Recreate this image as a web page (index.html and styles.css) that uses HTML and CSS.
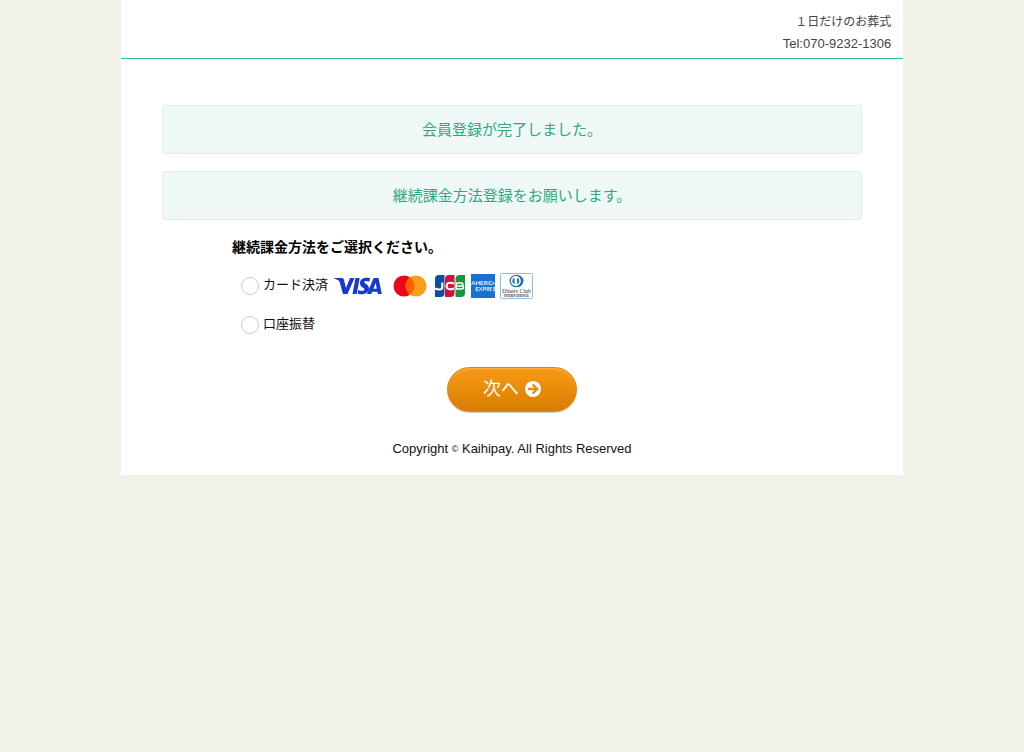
FILE: index.html
```html
<!DOCTYPE html>
<html lang="ja">
<head>
<meta charset="utf-8">
<meta name="viewport" content="width=device-width, initial-scale=1">
<title>会員登録</title>
<link rel="stylesheet" href="styles.css">
</head>
<body>
<div class="page">
  <header class="header">
    <p class="shop">１日だけのお葬式</p>
    <p class="tel">Tel:070-9232-1306</p>
  </header>
  <main class="main">
    <p class="notice">会員登録が完了しました。</p>
    <p class="notice">継続課金方法登録をお願いします。</p>
    <form class="form">
      <fieldset class="methods">
        <legend class="title">継続課金方法をご選択ください。</legend>
        <div class="option">
          <input class="radio" type="radio" name="method" id="card" value="card">
          <label class="label" for="card">カード決済</label>
          <span class="brands">
            <svg class="visa" width="48" height="18" viewBox="0 0 48 18" role="img" aria-label="VISA">
              <g fill="#1639d0">
                <path d="M0 1H7C9 1 9.700 1.500 10 3L12 11L16 1H20.500L13.500 17H9L5.500 4.500C4.500 3 2 2 0 1.500Z"/>
                <path d="M21.500 1H25.700L22.700 17H18.500Z"/>
                <path d="M36 1.300L35.300 4.700C33.500 3.900 30.300 3.800 30.300 5.200C30.300 6.700 35 7.300 35 11.200C35 15 31.600 17.200 28 17.200C26.200 17.200 24.600 16.800 23.600 16.400L24.300 12.900C26.300 14 30.500 14.400 30.500 12.300C30.500 10.500 26 10.200 26 6.200C26 1.300 31.500 0 36 1.300Z"/>
                <path fill-rule="evenodd" d="M41 1H44.500L47.800 17H43.900L43.400 14.700H38.200L37.200 17H33L39 2.200C39.400 1.300 40 1 41 1ZM41.700 6L39.400 11.700H42.800Z"/>
              </g>
            </svg>
            <svg class="mastercard" width="34" height="22" viewBox="0 0 34 22" role="img" aria-label="Mastercard">
              <circle cx="11" cy="11" r="10.500" fill="#eb0519"/>
              <circle cx="23" cy="11" r="10.500" fill="#f99d1c"/>
              <path d="M17 2.400A10.500 10.500 0 0 1 17 19.600A10.500 10.500 0 0 1 17 2.400Z" fill="#ff5f00"/>
            </svg>
            <svg class="jcb" width="30" height="24" viewBox="0 0 30 24" role="img" aria-label="JCB">
              <path d="M4 1H9.500V19Q9.500 23 5.500 23H0V5Q0 1 4 1Z" fill="#0c4f9c"/>
              <path d="M14 1H19.500V19Q19.500 23 15.500 23H10V5Q10 1 14 1Z" fill="#d2103c"/>
              <path d="M24.500 1H30V19Q30 23 26 23H20.500V5Q20.500 1 24.500 1Z" fill="#16983c"/>
              <path d="M7.300 8.500V13Q7.300 15.500 4.500 15.500Q2 15.500 0 14.500M18.800 9.500C15 8 11.600 8.600 11.600 12S15 16 18.800 14.500" fill="none" stroke="#fff" stroke-width="2"/>
              <path d="M21.300 8.500V15.500M21.300 9H26Q28 9 28 10.500T26 12H21.300M26 12Q28.500 12 28.500 13.500T26 15H21.300" fill="none" stroke="#fff" stroke-width="1.400"/>
            </svg>
            <svg class="amex" width="24" height="24" viewBox="0 0 24 24" role="img" aria-label="American Express">
              <path d="M0 0H24V24H0Z" fill="#1673d1"/>
              <g fill="none" stroke="#d8eafa" stroke-width=".9">
                <path d="M0.500 11L2.500 7L4.500 11M1.200 9.700H3.800M5.500 11V7.500L7 9.500L8.500 7.500V11M12 7.500H9.700V10.700H12M9.700 9.100H11.700M13.200 11V7.500H15.500V9.200H13.200M14.300 9.200L15.700 11M17 7.200V11M21 7.500H18.600V10.700H21M22 11V8L24 10.500"/>
                <path d="M7.500 13.500H5V16.700H7.500M5 15.100H7.200M8.200 13L11 17M11 13L8.200 17M12.300 17V13.500H14.500V15.200H12.300M16 17V13.500H18V15.200H16M17 15.200L18.300 17M20.700 13.500H19.200V16.700H20.700M19.200 15.100H20.500M24 13.500H22.300V15H24V16.700H22"/>
              </g>
            </svg>
            <svg class="diners" width="33" height="26" viewBox="0 0 33 26" role="img" aria-label="Diners Club International">
              <rect x=".5" y=".5" width="32" height="25" rx="1" fill="#fff" stroke="#8dbce8"/>
              <ellipse cx="16.500" cy="8" rx="7" ry="6.300" fill="#1474bd"/>
              <circle cx="15.800" cy="8" r="5" fill="#fff"/>
              <path d="M14.500 4.800A3.400 3.400 0 0 0 14.500 11.200ZM17.100 4.800A3.400 3.400 0 0 1 17.100 11.200Z" fill="#1474bd"/>
              <text x="16.500" y="19.500" text-anchor="middle" class="diners-name">Diners Club</text>
              <text x="16.500" y="23.500" text-anchor="middle" class="diners-sub">INTERNATIONAL</text>
            </svg>
          </span>
        </div>
        <div class="option">
          <input class="radio" type="radio" name="method" id="bank" value="bank">
          <label class="label" for="bank">口座振替</label>
        </div>
      </fieldset>
      <button class="next" type="button">次へ
        <svg width="16" height="16" viewBox="0 0 16 16" aria-hidden="true">
          <circle cx="8" cy="8" r="8" fill="#fff"/>
          <path d="M3 8H12M7.700 3.500L12.200 8L7.700 12.500" fill="none" stroke="#e88d0b" stroke-width="2.400"/>
        </svg>
      </button>
    </form>
  </main>
  <footer class="footer">Copyright <span class="mark">©</span> Kaihipay. All Rights Reserved</footer>
</div>
</body>
</html>
```
FILE: styles.css
```css
* { box-sizing: border-box; }
body {
  margin: 0;
  background-color: #f3f2ea;
  color: #111;
  font: 13px/20px "Liberation Sans", "Noto Sans CJK JP", sans-serif;
}
p { margin: 0; }
.page {
  width: 76.4%;
  margin: 0 auto;
  background: #fff;
}
.header {
  padding: 12px 12px 4px;
  border-bottom: 1px solid #3fb791;
  color: #444;
  text-align: right;
  line-height: 21px;
}
.shop { font-size: 12px; }
.main {
  max-width: 700px;
  margin: 0 auto;
  padding-top: 46px;
}
.notice {
  margin-bottom: 17px;
  padding: 12px;
  border: 1px solid #e0efea;
  border-radius: 3px;
  background: #eff8f6;
  color: #2fa880;
  font-size: 15px;
  line-height: 23px;
  text-align: center;
}
.form {
  display: flex;
  flex-direction: column;
  align-items: center;
}
.methods {
  width: 80%;
  margin: 0;
  padding: 0;
  border: 0;
}
.title {
  padding: 0;
  margin-bottom: 9px;
  color: #000;
  font-size: 14px;
  font-weight: 700;
  line-height: 20px;
}
.option {
  display: flex;
  align-items: center;
  min-height: 39px;
  padding-left: 9px;
}
.radio {
  appearance: none;
  width: 18px;
  height: 18px;
  margin: 0 4px 0 0;
  border: 1px solid #ccc;
  border-radius: 50%;
  background: #fff;
}
.radio:checked { border: 5px solid #2fa880; }
.label { padding-bottom: 2px; }
.brands {
  display: flex;
  align-items: center;
  margin-left: 6px;
}
.mastercard { margin-left: 11px; }
.jcb { margin-left: 8px; }
.amex { margin-left: 6px; }
.diners { margin-left: 5px; }
.diners-name {
  fill: #333;
  font: 6px "Liberation Serif", serif;
}
.diners-sub {
  fill: #222;
  font: bold 3px "Liberation Serif", serif;
}
.next {
  display: flex;
  align-items: center;
  justify-content: center;
  gap: 6px;
  width: 130px;
  height: 45px;
  margin-top: 23px;
  padding: 0 0 2px;
  border: 1px solid #d88612;
  border-radius: 23px;
  background: linear-gradient(#f79a16, #d77d00);
  box-shadow: inset 0 1px 1px #ffb347, 0 1px 1px #ccc;
  color: #fff;
  font: 18px/24px "Liberation Sans", "Noto Sans CJK JP", sans-serif;
}
.footer {
  padding: 27px 0 16px;
  text-align: center;
}
.mark { font-size: 9px; vertical-align: 1px; }
```
